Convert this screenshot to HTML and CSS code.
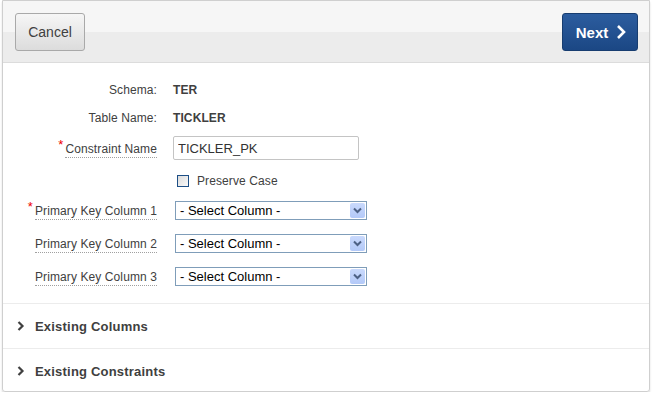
FILE: index.html
```html
<!DOCTYPE html>
<html>
<head>
  <title>Create Primary Key</title>
  <link rel="stylesheet" href="styles.css">
</head>
<body>

  <div class="region">
    <div class="buttons">
      <button class="btn">Cancel</button>
      <button class="btn btn-hot">Next
        <svg width="10" height="16" viewBox="0 0 10 16"><polyline points="2,2 8,8 2,14" fill="none" stroke="#fff" stroke-width="2.6"/></svg>
      </button>
    </div>

    <div class="form">
      <div class="row r28">
        <div class="label">Schema:</div>
        <div class="value">TER</div>
      </div>
      <div class="row r28">
        <div class="label">Table Name:</div>
        <div class="value">TICKLER</div>
      </div>
      <div class="row r32">
        <div class="label"><span class="req">*</span><span class="help">Constraint Name</span></div>
        <div><input class="text" type="text" value="TICKLER_PK"></div>
      </div>
      <div class="row r30">
        <div></div>
        <label class="check"><span class="box"></span>Preserve Case</label>
      </div>
      <div class="row r33">
        <div class="label"><span class="req">*</span><span class="help">Primary Key Column 1</span></div>
        <div class="select"><span>- Select Column -</span><span class="arrow"><svg width="9" height="7" viewBox="0 0 9 7"><polyline points="1,1.5 4.5,5 8,1.5" fill="none" stroke="#4d6185" stroke-width="2"/></svg></span></div>
      </div>
      <div class="row r33">
        <div class="label"><span class="help">Primary Key Column 2</span></div>
        <div class="select"><span>- Select Column -</span><span class="arrow"><svg width="9" height="7" viewBox="0 0 9 7"><polyline points="1,1.5 4.5,5 8,1.5" fill="none" stroke="#4d6185" stroke-width="2"/></svg></span></div>
      </div>
      <div class="row r33">
        <div class="label"><span class="help">Primary Key Column 3</span></div>
        <div class="select"><span>- Select Column -</span><span class="arrow"><svg width="9" height="7" viewBox="0 0 9 7"><polyline points="1,1.5 4.5,5 8,1.5" fill="none" stroke="#4d6185" stroke-width="2"/></svg></span></div>
      </div>
    </div>

    <div class="section">
      <svg width="8" height="10" viewBox="0 0 8 10"><polyline points="1.5,1 5.5,5 1.5,9" fill="none" stroke="#404040" stroke-width="2.2"/></svg>
      Existing Columns
    </div>
    <div class="section">
      <svg width="8" height="10" viewBox="0 0 8 10"><polyline points="1.5,1 5.5,5 1.5,9" fill="none" stroke="#404040" stroke-width="2.2"/></svg>
      Existing Constraints
    </div>
  </div>

</body>
</html>
```

FILE: styles.css
```css
body {
  margin: 0;
  background: #fff;
  font-family: 'Liberation Sans', Arial, sans-serif;
  color: #404040;
}

.region {
  margin: 0 2px;
  border: 1px solid #cfcfcf;
  border-radius: 0 0 3px 3px;
  box-shadow: 0 2px 2px rgba(0, 0, 0, 0.15);
  height: 392px;
  box-sizing: border-box;
}

.buttons {
  display: flex;
  justify-content: space-between;
  padding: 12px 11px 11px 12px;
  background: linear-gradient(#f6f6f6 0%, #f6f6f6 50%, #ececec 50%, #ececec 100%);
  border-bottom: 1px solid #dcdcdc;
}

.btn {
  height: 38px;
  width: 70px;
  border: 1px solid #a9a9a9;
  border-radius: 3px;
  background: linear-gradient(#f6f6f6, #dcdcdc);
  font-family: 'Liberation Sans', Arial, sans-serif;
  font-size: 14px;
  color: #404040;
  padding: 0;
}

.btn-hot {
  width: 76px;
  background: linear-gradient(#2c5d9f, #1b4784);
  border-color: #173d70;
  color: #fff;
  font-weight: bold;
  font-size: 15px;
  display: flex;
  align-items: center;
  justify-content: center;
  gap: 8px;
  padding-left: 2px;
}

.form {
  padding: 13px 0 10px;
  border-bottom: 1px solid #ececec;
}

.row {
  display: grid;
  grid-template-columns: 154px 1fr;
  column-gap: 16px;
  align-items: center;
  font-size: 12px;
  letter-spacing: 0.1px;
}

.r28 { height: 28px; }
.r30 { height: 30px; }
.r32 { height: 32px; }
.r33 { height: 33px; }

.label {
  text-align: right;
}

.help {
  border-bottom: 1px dotted #a0a0a0;
  padding-bottom: 1px;
}

.req {
  color: #e00;
  font-size: 13px;
  position: relative;
  top: -4px;
  margin-right: 2px;
}

.value {
  font-weight: bold;
}

.text {
  width: 186px;
  height: 24px;
  box-sizing: border-box;
  border: 1px solid #c4c4c4;
  border-radius: 2px;
  padding: 0 4px;
  font-family: 'Liberation Sans', Arial, sans-serif;
  font-size: 13px;
  color: #333;
}

.check {
  display: flex;
  align-items: center;
  gap: 8px;
  margin-left: 4px;
  padding-top: 4px;
}

.box {
  width: 10px;
  height: 10px;
  border: 1px solid #1d4f86;
  background: linear-gradient(135deg, #dcdcdc, #fafafa);
}

.select {
  width: 192px;
  height: 19px;
  box-sizing: border-box;
  margin-left: 2px;
  border: 1px solid #7f9db9;
  display: flex;
  align-items: center;
  justify-content: space-between;
  font-family: 'Liberation Sans', Tahoma, sans-serif;
  font-size: 13px;
  letter-spacing: 0;
  color: #000;
  padding-left: 4px;
}

.arrow {
  width: 15px;
  height: 15px;
  margin-right: 1px;
  background: linear-gradient(#c9d9fc, #b3c9f8);
  border-radius: 2px;
  display: flex;
  align-items: center;
  justify-content: center;
}

.section {
  height: 44px;
  display: flex;
  align-items: center;
  gap: 10px;
  padding-left: 14px;
  font-size: 13px;
  font-weight: bold;
  color: #404040;
  letter-spacing: 0.2px;
}

.section + .section {
  border-top: 1px solid #ececec;
}
```
